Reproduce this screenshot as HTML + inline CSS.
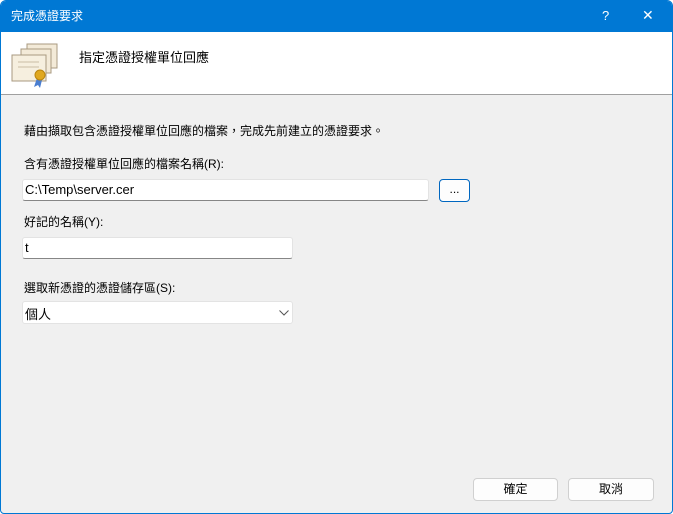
<!DOCTYPE html>
<html><head><meta charset="utf-8"><style>
*{margin:0;padding:0;box-sizing:border-box}
body{width:673px;height:514px;overflow:hidden;background:#fff;font-family:"Liberation Sans","Noto Sans CJK TC",sans-serif;font-size:12px;color:#000}
.win{position:absolute;left:0;top:0;width:673px;height:514px;border:1px solid #0078d4;background:#f0f0f0;border-radius:6px 6px 4px 4px;overflow:hidden}
.title{position:absolute;left:0;top:0;width:100%;height:31px;background:#0078d4;color:#fff;font-size:12px}
.title .t{position:absolute;left:10px;top:6px}
.title .q{position:absolute;left:601px;top:7px;font-size:13px}
.title .x{position:absolute;left:641px;top:6px;font-size:14px}
.head{position:absolute;left:0;top:31px;width:100%;height:63px;background:#fff;border-bottom:1px solid #a0a0a0}
.head .h{position:absolute;left:78px;top:15px;font-size:13px}
.abs{position:absolute}
.inp{position:absolute;background:#fff;border:1px solid #e3e3e3;border-bottom:1px solid #868686;border-radius:3px;padding:2px 2px;font-size:13px}
.btn{position:absolute;background:#fdfdfd;border:1px solid #d0d0d0;border-radius:4px;text-align:center;font-size:12px;line-height:21px}
</style></head><body><div class="win">
<div class="title"><span class="t">完成憑證要求</span><span class="q">?</span><span class="x">✕</span></div>
<div class="head">
<svg class="abs" style="left:8px;top:10px" width="50" height="46" viewBox="0 0 50 46">
<rect x="18" y="2" width="30" height="24" fill="#f3ead8" stroke="#a89a80"/>
<rect x="12" y="7" width="30" height="24" fill="#f3ead8" stroke="#a89a80"/>
<rect x="3" y="13" width="34" height="26" fill="#f6efdf" stroke="#a89a80"/>
<line x1="9" y1="20" x2="30" y2="20" stroke="#c9bda4"/><line x1="9" y1="25" x2="30" y2="25" stroke="#c9bda4"/>
<path d="M28 36 l-3 9 l4 -2 l2 3 l2 -8z" fill="#4a7ed0"/>
<circle cx="31" cy="33" r="5" fill="#e0a820" stroke="#b98510"/>
</svg>
<span class="h">指定憑證授權單位回應</span></div>
<div class="abs" style="left:23px;top:121px">藉由擷取包含憑證授權單位回應的檔案，完成先前建立的憑證要求。</div>
<div class="abs" style="left:23px;top:154px">含有憑證授權單位回應的檔案名稱(R):</div>
<div class="inp" style="left:21px;top:178px;width:407px;height:22px">C:\Temp\server.cer</div>
<div class="btn" style="left:438px;top:178px;width:31px;height:23px;border-color:#0067c0;line-height:19px">...</div>
<div class="abs" style="left:23px;top:212px">好記的名稱(Y):</div>
<div class="inp" style="left:21px;top:236px;width:271px;height:22px">t</div>
<div class="abs" style="left:23px;top:278px">選取新憑證的憑證儲存區(S):</div>
<div class="inp" style="left:21px;top:300px;width:271px;height:23px;border-bottom-color:#e3e3e3">個人
<svg class="abs" style="left:256px;top:8px" width="10" height="6"><path d="M0.5 0.5 L5 5 L9.5 0.5" fill="none" stroke="#555"/></svg></div>
<div class="btn" style="left:472px;top:477px;width:85px;height:23px">確定</div>
<div class="btn" style="left:567px;top:477px;width:86px;height:23px">取消</div>
</div></body></html>
